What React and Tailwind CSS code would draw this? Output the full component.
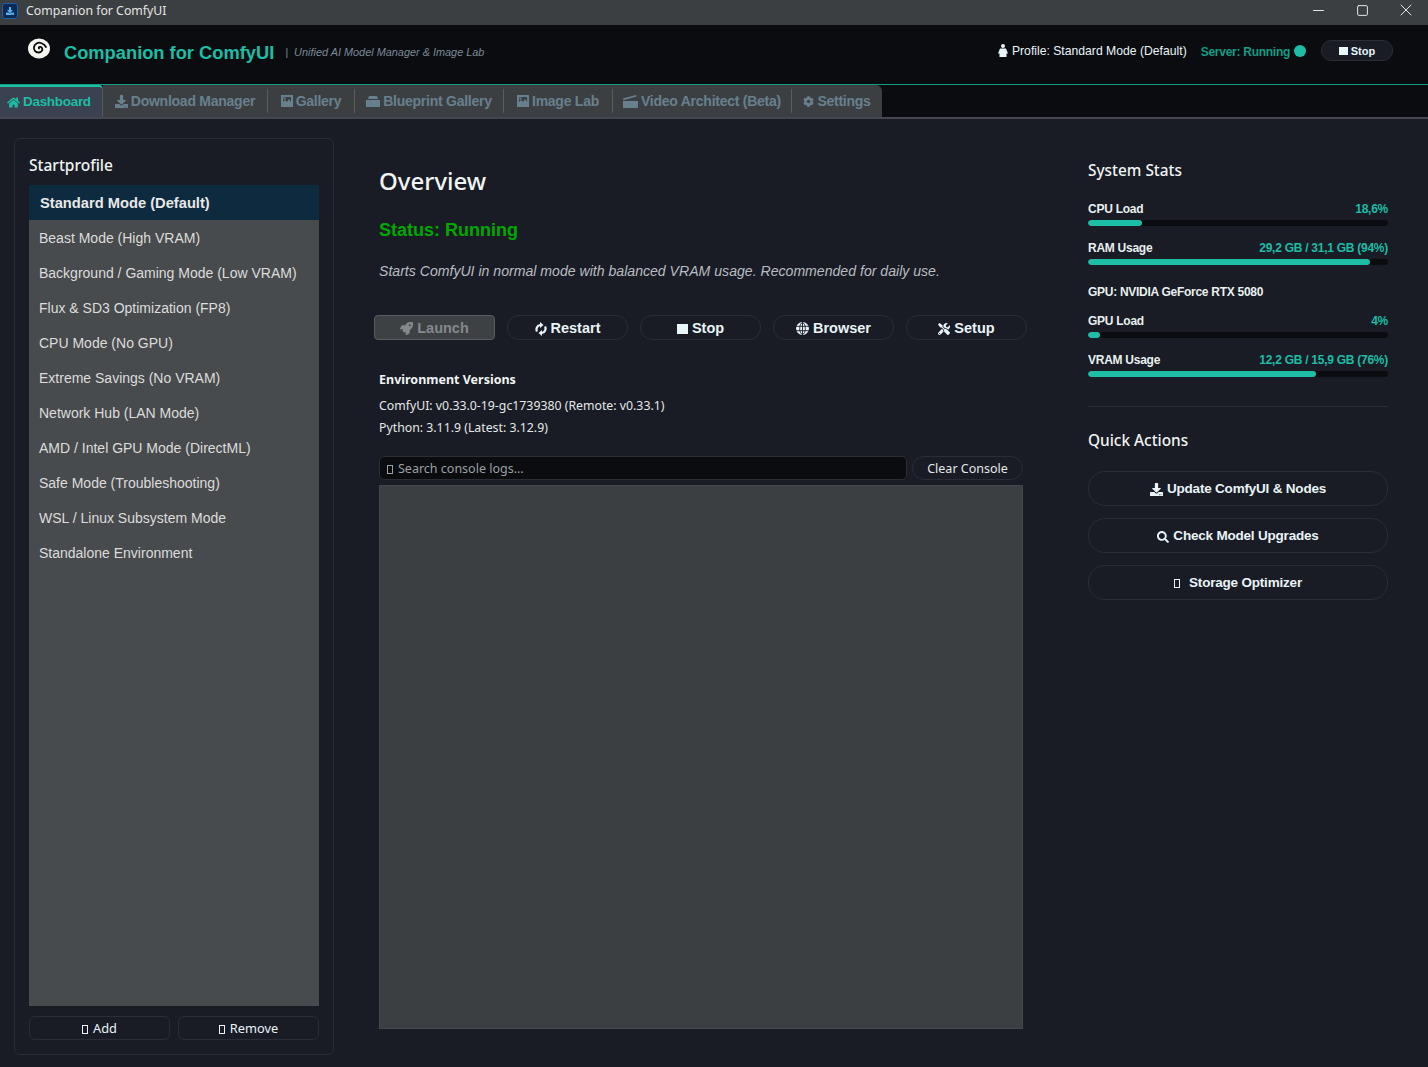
import React from 'react';
import { FaHome, FaDownload, FaRocket, FaTools, FaSearch, FaCog } from 'react-icons/fa';
import { Minus, Square, X } from 'lucide-react';

const segoe = { fontFamily: '"Noto Sans", "Open Sans", sans-serif' };

// tofu box, a glyph the original font could not show
const Tofu = ({ className = '' }) => (
  <span className={`inline-block w-[6px] h-[9px] border border-current ${className}`}></span>
);

const Clapper = () => (
  <svg width="15" height="13" viewBox="0 0 15 13" fill="currentColor">
    <path d="M0 6h15v7H0z" />
    <path d="M0 3.500 13 0l.5 1.600L.5 5.200z" />
  </svg>
);

const Picture = () => (
  <svg width="12" height="12" viewBox="0 0 12 12" fill="currentColor">
    <path fillRule="evenodd" d="M0 0h12v12H0zM2 2v5l2-2 2 2 2-3 2 3V2z" />
    <rect x="2.500" y="2.500" width="2" height="2" />
  </svg>
);

const CardBox = () => (
  <svg width="14" height="11" viewBox="0 0 14 11" fill="currentColor">
    <path d="M3 0h8l1 3H2z" />
    <path d="M0 4h14v7H0z" />
  </svg>
);

const Person = () => (
  <svg width="10" height="13" viewBox="0 0 10 13" fill="#e8f4f8">
    <circle cx="5" cy="2" r="2" />
    <path d="M2 4.500h6l2 5H8.500V13h-7V9.500H0z" />
  </svg>
);

const Swirl = () => (
  <svg width="24" height="22" viewBox="0 0 24 22" fill="none">
    <ellipse cx="12" cy="10.500" rx="11" ry="10" fill="#f5f5f0" />
    <path d="M12 10.500c-1-1.500 2-2.500 3-.5s-.5 4.500-3.500 4.500-5-2.500-4.500-5.500 4-5 7-4 4 2 5 4" stroke="#0a0c10" strokeWidth="1.800" strokeLinecap="round" />
  </svg>
);

const Cycle = () => (
  <svg width="12" height="14" viewBox="0 0 12 14" fill="none">
    <path d="M2 9.500A4.500 4.500 0 0 1 5 3" stroke="#e8f4f8" strokeWidth="2.200" />
    <path d="M5 0l3.500 3L5 6z" fill="#e8f4f8" />
    <path d="M10 4.500A4.500 4.500 0 0 1 7 11" stroke="#e8f4f8" strokeWidth="2.200" />
    <path d="M7 8l-3.500 3L7 14z" fill="#e8f4f8" />
  </svg>
);

const GlobeGrid = () => (
  <svg width="13" height="13" viewBox="0 0 13 13" fill="none">
    <circle cx="6.500" cy="6.500" r="6.500" fill="#e8f4f8" />
    <ellipse cx="6.500" cy="6.500" rx="2.800" ry="5.800" stroke="#191c24" strokeWidth=".9" />
    <path d="M6.500 0v13M0 4.300h13M0 8.700h13" stroke="#191c24" strokeWidth=".9" />
  </svg>
);

const tabs = [
  { label: 'Download Manager', icon: <FaDownload size={13} />, w: 'w-[165px]' },
  { label: 'Gallery', icon: <Picture />, w: 'w-[87px]' },
  { label: 'Blueprint Gallery', icon: <CardBox />, w: 'w-[149px]' },
  { label: 'Image Lab', icon: <Picture />, w: 'w-[109px]' },
  { label: 'Video Architect (Beta)', icon: <Clapper />, w: 'w-[179px]' },
  { label: 'Settings', icon: <FaCog size={11} />, w: 'w-[90px]', last: true },
];

const profiles = [
  'Beast Mode (High VRAM)',
  'Background / Gaming Mode (Low VRAM)',
  'Flux & SD3 Optimization (FP8)',
  'CPU Mode (No GPU)',
  'Extreme Savings (No VRAM)',
  'Network Hub (LAN Mode)',
  'AMD / Intel GPU Mode (DirectML)',
  'Safe Mode (Troubleshooting)',
  'WSL / Linux Subsystem Mode',
  'Standalone Environment',
];

const actions = [
  { label: 'Restart', icon: <Cycle /> },
  { label: 'Stop', icon: <span className="w-[11px] h-[10px] bg-[#e8f8f8]"></span> },
  { label: 'Browser', icon: <GlobeGrid /> },
  { label: 'Setup', icon: <FaTools size={12} /> },
];

const Stat = ({ label, value, pct, className = '' }) => (
  <div className={className}>
    <div className="flex justify-between items-center h-[14px] text-[12px] tracking-[-0.26px] font-bold">
      <span className="text-[#e8f0f0]">{label}</span>
      <span className="text-[#1dbda6]">{value}</span>
    </div>
    <div className="mt-[4px] h-[6px] rounded-[3px] bg-[#0a0c10] overflow-hidden">
      <div className="h-full rounded-[3px] bg-[#1dbda6]" style={{ width: `${pct}%` }}></div>
    </div>
  </div>
);

const QuickAction = ({ icon, children }) => (
  <button className="h-[35px] w-full pt-[2px] rounded-[17px] border border-[#2a2d35] flex items-center justify-center gap-[4px] text-[13.5px] tracking-[-0.2px] font-bold text-[#e8f4f8]">
    {icon}
    {children}
  </button>
);

export default function App() {
  return (
    <div className="w-[1428px] h-[1067px] overflow-hidden bg-[#191c24] flex flex-col" style={{ fontFamily: '"Liberation Sans", Arial, sans-serif' }}>
      {/* Title bar */}
      <div className="h-[25px] bg-[#3c3f41] flex items-center shrink-0 text-[#e4e6e6]">
        <div className="ml-[2px] w-[16px] h-[16px] mb-[3px] rounded-[3px] bg-[#0c2a52] border border-[#1d5fa8] flex items-center justify-center">
          <FaDownload size={8} className="text-[#5ab0f0]" />
        </div>
        <span className="ml-[8px] mb-[3px] text-[12.3px]" style={segoe}>Companion for ComfyUI</span>
        <div className="ml-auto mb-[5px] flex items-center">
          <div className="w-[44px] flex justify-center"><Minus size={17} absoluteStrokeWidth strokeWidth={1} /></div>
          <div className="w-[44px] flex justify-center"><Square size={13} absoluteStrokeWidth strokeWidth={1} /></div>
          <div className="w-[44px] flex justify-center"><X size={20} absoluteStrokeWidth strokeWidth={1} /></div>
        </div>
      </div>

      {/* Header */}
      <div className="h-[60px] bg-[#0a0c10] border-b border-[#149c84] flex items-start shrink-0">
        <div className="ml-[27px] mt-[13px]"><Swirl /></div>
        <span className="ml-[13px] mt-[14px] text-[18.3px] font-bold text-[#1dbda6]">Companion for ComfyUI</span>
        <span className="ml-[11px] mt-[19px] text-[10.9px] italic text-[#7a8a96]">|&nbsp; Unified AI Model Manager &amp; Image Lab</span>
        <div className="ml-auto mr-[35px] mt-[15px] h-[21px] flex items-center">
          <Person />
          <span className="ml-[4px] pt-[2px] text-[12.2px] text-[#e8f4f8]">Profile: Standard Mode (Default)</span>
          <span className="ml-[14px] pt-[2px] text-[12px] tracking-[-0.27px] font-bold text-[#149c84]">Server: Running</span>
          <span className="ml-[4px] w-[12px] h-[12px] rounded-full bg-[#1dbda6]"></span>
          <button className="ml-[15px] w-[72px] h-[21px] pt-[1px] rounded-[10px] bg-[#191c24] border border-[#2a2d35] flex items-center justify-center gap-[3px] text-[11px] font-bold text-[#e8f4f8]">
            <span className="w-[9px] h-[8px] bg-[#e8f8f8]"></span>Stop
          </button>
        </div>
      </div>

      {/* Tabs */}
      <div className="h-[34px] bg-[#0a0c10] border-b-2 border-[#44474f] flex shrink-0">
        <div className="w-[103px] h-[32px] bg-[#3a4150] border-t-2 border-r border-t-[#1dbda6] border-r-[#55585c] rounded-tr-[4px] flex items-center pl-[7px] gap-[3px] text-[#1dbda6] text-[13.5px] tracking-[-0.3px] font-bold">
          <FaHome size={13} />Dashboard
        </div>
        <div className="h-[32px] bg-[#3c3f41] rounded-tr-[6px] flex items-center">
          {tabs.map((t) => (
            <div key={t.label} className={`${t.w} h-[24px] flex items-center justify-center gap-[3px] text-[#68808e] text-[14px] tracking-[-0.25px] font-bold ${t.last ? '' : 'border-r border-[#5a5d60]'}`}>
              {t.icon}{t.label}
            </div>
          ))}
        </div>
      </div>

      {/* Content */}
      <div className="flex-1 min-h-0 flex items-start pl-[14px] pt-[19px]">
        {/* Sidebar */}
        <div className="w-[320px] h-[917px] rounded-[6px] border border-[#2a2d35] bg-[#191c24] px-[14px] flex flex-col">
          <div className="h-[46px] pt-[14px] text-[15.5px] leading-[24px] font-medium text-[#f0f4f4]" style={segoe}>Startprofile</div>
          <div className="h-[821px] bg-[#484b4d] text-[14px] text-[#dcdcdc]">
            <div className="h-[35px] pt-[2px] bg-[#0e2a3f] flex items-center pl-[11px] text-[14.7px] font-bold text-[#e8e8e8]">Standard Mode (Default)</div>
            {profiles.map((p) => (
              <div key={p} className="h-[35px] pt-[2px] flex items-center pl-[10px]">{p}</div>
            ))}
          </div>
          <div className="mt-[10px] flex gap-[8px] text-[12.8px] text-[#e8f4f8]" style={segoe}>
            <button className="flex-1 h-[24px] pt-[2px] rounded-[6px] border border-[#2a2d35] flex items-center justify-center gap-[5px]"><Tofu />Add</button>
            <button className="flex-1 h-[24px] pt-[2px] rounded-[6px] border border-[#2a2d35] flex items-center justify-center gap-[5px]"><Tofu />Remove</button>
          </div>
        </div>

        {/* Overview */}
        <div className="ml-[45px] w-[648px] flex flex-col">
          <div className="mt-[27px] h-[32px] text-[24px] leading-[32px] font-medium text-[#f0f4f4]" style={segoe}>Overview</div>
          <div className="mt-[21px] h-[24px] text-[18px] leading-[24px] font-bold text-[#00a800]">Status: Running</div>
          <div className="mt-[20px] h-[18px] text-[14.1px] leading-[18px] italic text-[#b8bcc0]">Starts ComfyUI in normal mode with balanced VRAM usage. Recommended for daily use.</div>

          <div className="mt-[35px] -ml-[5px] flex gap-[12px] text-[14.5px] font-bold">
            <button className="w-[121px] h-[25px] pt-[2px] rounded-[4px] bg-[#3e4144] border border-[#5a5d60] flex items-center justify-center gap-[4px] text-[#84888c]">
              <FaRocket size={13} />Launch
            </button>
            {actions.map((a) => (
              <button key={a.label} className="w-[121px] h-[25px] pt-[2px] rounded-[12px] border border-[#2a2d35] flex items-center justify-center gap-[4px] text-[#e8f4f8]">
                {a.icon}{a.label}
              </button>
            ))}
          </div>

          <div className="mt-[31px] text-[12.5px] leading-[18px] font-bold text-[#f0f4f4]" style={segoe}>Environment Versions</div>
          <div className="mt-[6px] text-[12.3px] leading-[22px] text-[#e4e8e8]" style={segoe}>
            <div>ComfyUI: v0.33.0-19-gc1739380 (Remote: v0.33.1)</div>
            <div>Python: 3.11.9 (Latest: 3.12.9)</div>
          </div>

          <div className="mt-[17px] flex w-[644px] gap-[5px] text-[12.5px]" style={segoe}>
            <div className="flex-1 h-[24px] pt-[2px] rounded-[5px] bg-[#0a0c10] border border-[#2a2d35] flex items-center pl-[7px] gap-[5px] text-[#9aa0a4]">
              <Tofu />Search console logs...
            </div>
            <button className="w-[111px] h-[24px] pt-[2px] rounded-[12px] border border-[#2a2d35] text-[#e4e8e8]">Clear Console</button>
          </div>
          <div className="mt-[5px] w-[644px] h-[544px] bg-[#3c3f41] border border-[#44474a]"></div>
        </div>

        {/* Right column */}
        <div className="ml-[61px] w-[300px] flex flex-col">
          <div className="mt-[21px] h-[24px] text-[15.4px] leading-[24px] font-medium text-[#f0f4f4]" style={segoe}>System Stats</div>
          <Stat className="mt-[19px]" label="CPU Load" value="18,6%" pct={18} />
          <Stat className="mt-[15px]" label="RAM Usage" value="29,2 GB / 31,1 GB (94%)" pct={94} />
          <div className="mt-[20px] h-[14px] text-[12px] tracking-[-0.28px] leading-[14px] font-bold text-[#e8f0f0]">GPU: NVIDIA GeForce RTX 5080</div>
          <Stat className="mt-[15px]" label="GPU Load" value="4%" pct={4} />
          <Stat className="mt-[15px]" label="VRAM Usage" value="12,2 GB / 15,9 GB (76%)" pct={76} />
          <div className="mt-[29px] border-t border-[#2a2d35]"></div>
          <div className="mt-[22px] h-[24px] text-[15.4px] leading-[24px] font-medium text-[#f0f4f4]" style={segoe}>Quick Actions</div>
          <div className="mt-[18px] flex flex-col gap-[12px]">
            <QuickAction icon={<FaDownload size={13} />}>Update ComfyUI &amp; Nodes</QuickAction>
            <QuickAction icon={<FaSearch size={12} />}>Check Model Upgrades</QuickAction>
            <QuickAction icon={<Tofu className="mr-[5px]" />}>Storage Optimizer</QuickAction>
          </div>
        </div>
      </div>
    </div>
  );
}
